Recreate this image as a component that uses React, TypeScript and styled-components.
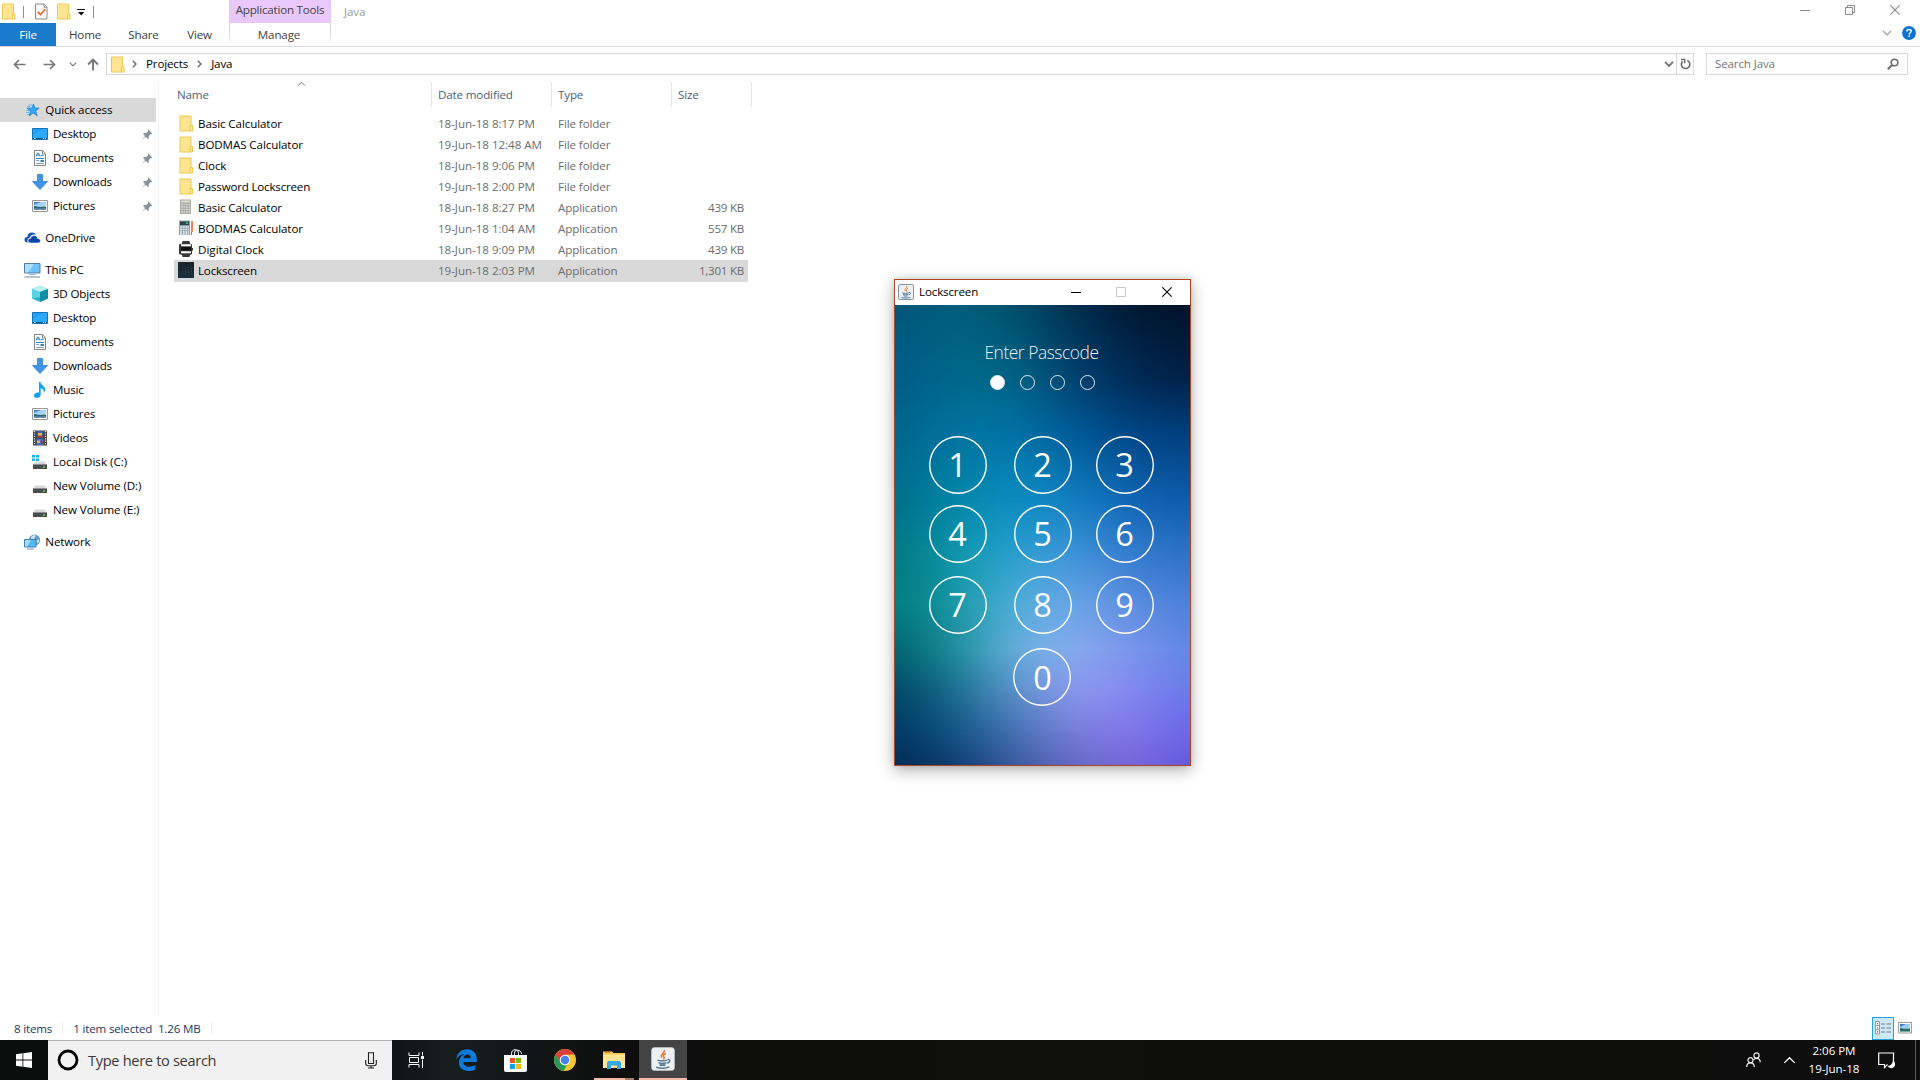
import React from 'react';
import styled, { createGlobalStyle, css } from 'styled-components';

const Global = createGlobalStyle`
  * { box-sizing: border-box; }
  body { margin: 0; background: #fff; overflow: hidden; }
  #root { height: 1080px; }
`;

const Desktop = styled.div`
  width: 1920px;
  height: 1080px;
  display: flex;
  flex-direction: column;
  background: #fff;
  color: #000;
  font: 11.6px/16px 'Open Sans', 'Noto Sans', sans-serif;
  letter-spacing: -0.15px;
  white-space: nowrap;
`;

const Label = styled.span<{ $ls?: number }>`
  ${p => p.$ls !== undefined && css`letter-spacing: ${p.$ls}px;`}
`;
const Gap = styled.i<{ $w: number }>`
  flex: none;
  width: ${p => p.$w}px;
`;

/* ---------- title bar and ribbon ---------- */

const Ribbon = styled.header`
  display: flex;
  height: 47px;
  border-bottom: 1px solid #dadbdc;
`;
const RibbonLeft = styled.div`
  width: 229px;
  display: flex;
  flex-direction: column;
`;
const QuickTools = styled.div`
  height: 23px;
  display: flex;
  align-items: center;
  padding-left: 2px;
`;
const ToolDivider = styled.i<{ $l: number; $r: number }>`
  width: 1px;
  height: 12px;
  background: #8f8f8f;
  margin: 0 ${p => p.$r}px 0 ${p => p.$l}px;
`;
const Tabs = styled.nav`
  display: flex;
  height: 23px;
  line-height: 24px;
  color: #3b3b3b;
`;
const FileTab = styled.div`
  width: 56px;
  background: #1979ca;
  color: #fff;
  text-align: center;
`;
const Tab = styled.div<{ $w: number }>`
  width: ${p => p.$w}px;
  text-align: center;
`;
const ContextTab = styled.div`
  width: 102px;
  text-align: center;
  color: #444;
`;
const ContextTitle = styled.div`
  height: 23px;
  line-height: 20px;
  letter-spacing: -0.22px;
  background: #e9c9fb;
`;
const ContextName = styled.div`
  height: 19px;
  line-height: 24px;
  padding-right: 2px;
  border: 1px solid;
  border-width: 0 1px;
  border-image: linear-gradient(#c9c9c9, #eee) 1;
`;
const WindowTitle = styled.div`
  flex: 1;
  padding: 4px 0 0 13px;
  color: #999;
`;
const WindowControls = styled.div`
  display: flex;
  flex-direction: column;
  align-items: flex-end;
`;
const ControlRow = styled.div<{ $gap: number; $pr: number; $h: number }>`
  display: flex;
  align-items: center;
  height: ${p => p.$h}px;
  gap: ${p => p.$gap}px;
  padding-right: ${p => p.$pr}px;
`;

/* ---------- address bar ---------- */

const AddressRow = styled.div`
  height: 35px;
  display: flex;
  align-items: flex-start;
  padding-top: 6px;
`;
const NavButtons = styled.div`
  width: 106px;
  height: 22px;
  display: flex;
  align-items: center;
  padding-left: 12.5px;
`;
const PathBox = styled.div`
  width: 1588px;
  height: 22px;
  border: 1px solid #d9d9d9;
  display: flex;
  align-items: center;
  padding-left: 4px;
`;
const Crumb = styled.span`
  margin: 0 9px 0 9px;
`;
const PathEnd = styled.div`
  margin-left: auto;
  display: flex;
  align-items: center;
  height: 100%;
`;
const Refresh = styled.div`
  width: 17px;
  height: 100%;
  margin-left: 2px;
  padding-left: 1px;
  border-left: 1px solid #d9d9d9;
  display: grid;
  place-items: center;
`;
const SearchBox = styled.div`
  width: 202px;
  height: 22px;
  margin-left: 12px;
  border: 1px solid #d9d9d9;
  display: flex;
  align-items: center;
  justify-content: space-between;
  padding: 0 8px;
  color: #767676;
`;

/* ---------- navigation pane ---------- */

const Body = styled.div`
  flex: 1;
  display: flex;
  min-height: 0;
`;
const Sidebar = styled.aside`
  width: 159px;
  border-right: 1px solid #f2f2f2;
  padding-top: 16px;
`;
const Group = styled.div`
  margin-bottom: 8px;
`;
const NavItem = styled.div<{ $top?: boolean; $selected?: boolean }>`
  height: 24px;
  width: 156px;
  display: flex;
  align-items: center;
  padding-left: ${p => (p.$top ? 24 : 32)}px;
  background: ${p => (p.$selected ? '#d9d9d9' : 'none')};
  & > svg:first-child {
    flex: none;
    width: ${p => (p.$top ? 17 : 16)}px;
    margin-right: ${p => (p.$top ? 4.3 : 4.9)}px;
  }
  & > svg + span + svg { margin-left: auto; margin-right: 3px; }
`;

/* ---------- file list ---------- */

const FileArea = styled.main`
  padding-left: 15px;
`;
const columns = css`
  display: grid;
  grid-template-columns: 258px 120px 120px 80px;
`;
const HeadRow = styled.div`
  ${columns}
  height: 25px;
  color: #4c607a;
`;
const HeadCell = styled.div<{ $first?: boolean }>`
  border-right: 1px solid #e5e5e5;
  padding: 5px 0 0 ${p => (p.$first ? 3 : 6)}px;
  display: flex;
`;
const SortMark = styled.span`
  margin: -6px 0 0 88px;
  line-height: 0;
`;
const FileRows = styled.div`
  padding-top: 6px;
`;
const FileRow = styled.div<{ $selected?: boolean }>`
  ${columns}
  grid-template-columns: 258px 120px 120px 76px;
  width: 574px;
  height: ${p => (p.$selected ? 22 : 21)}px;
  align-items: start;
  line-height: 21px;
  color: #6d6d6d;
  background: ${p => (p.$selected ? '#d9d9d9' : 'none')};
`;
const FileName = styled.div`
  display: flex;
  align-items: center;
  height: 21px;
  gap: 4px;
  padding-left: 4px;
  letter-spacing: -0.1px;
  color: #000;
  & > svg { margin-top: -1px; }
`;
const Cell = styled.div<{ $right?: boolean; $date?: boolean }>`
  padding: 0 4px 0 6px;
  text-align: ${p => (p.$right ? 'right' : 'left')};
  letter-spacing: ${p => (p.$right ? -0.25 : p.$date ? -0.04 : -0.1)}px;
`;

/* ---------- status bar ---------- */

const StatusBar = styled.footer`
  height: 24px;
  display: flex;
  align-items: center;
  padding-left: 14px;
  letter-spacing: -0.18px;
  color: #1e395b;
  & > span { margin-top: 1px; }
`;
const StatusDivider = styled.i<{ $l: number; $r: number }>`
  width: 1px;
  height: 12px;
  background: #ececec;
  margin: 0 ${p => p.$r}px 0 ${p => p.$l}px;
`;
const ViewToggle = styled.div`
  margin-left: auto;
  display: flex;
  align-items: center;
  padding-right: 8px;
  gap: 4px;
`;
const ViewSelected = styled.div`
  width: 22px;
  height: 23px;
  border: 1px solid #26a0da;
  background: #cbe8f6;
  display: grid;
  place-items: center;
`;

/* ---------- taskbar ---------- */

const Taskbar = styled.div`
  height: 40px;
  display: flex;
  background: linear-gradient(90deg, #0b0c0c 0, #101414 390px, #161e1e 450px, #0d0e0d 620px, #0f0f0d 1000px, #0d0e0d 100%);
  color: #fff;
`;
const StartButton = styled.div`
  width: 48px;
  display: grid;
  place-items: center;
`;
const TaskSearch = styled.div`
  width: 344px;
  background: #f1f1f1;
  border-top: 1px solid #b5b5b5;
  display: flex;
  align-items: center;
  padding: 0 15px 1px 9px;
  font-size: 14.6px;
  letter-spacing: -0.32px;
  color: #3a3a3a;
  & > span { margin: 0 auto 0 9px; }
`;
const TaskButton = styled.div<{ $active?: boolean; $open?: boolean; $first?: boolean }>`
  width: ${p => (p.$active ? 48 : 49)}px;
  margin-right: ${p => (p.$first ? 1.5 : 0)}px;
  padding-right: ${p => (p.$active ? 0 : 1)}px;
  display: grid;
  place-items: center;
  background: ${p => (p.$active ? '#434443' : 'none')};
  border-bottom: ${p => (p.$active ? '2px solid #f5bba7' : '0 solid')};
  ${p => p.$open && css`
    background: linear-gradient(90deg, transparent 4px, #f5bba7 4px, #f5bba7 35px, #a67e71 35px, #a67e71 44px, transparent 44px) bottom / 100% 2px no-repeat;
  `}
`;
const Tray = styled.div`
  margin-left: auto;
  display: flex;
  align-items: center;
`;
const Clock = styled.div`
  width: 56px;
  margin: 0 16px 1px 10px;
  text-align: center;
  line-height: 18px;
  letter-spacing: -0.05px;
`;
const ShowDesktop = styled.i`
  height: 40px;
  width: 5px;
  margin-left: 20px;
  border-left: 1px solid #5b5b5b;
`;

/* ---------- lockscreen window ---------- */

const LockWindow = styled.section`
  position: absolute;
  left: 894px;
  top: 279px;
  width: 297px;
  height: 487px;
  border: 1px solid #b3441c;
  box-shadow: 0 4px 15px rgba(0, 0, 0, 0.32), 0 0 5px rgba(0, 0, 0, 0.1);
  display: flex;
  flex-direction: column;
  background: #fff;
`;
const LockTitle = styled.div`
  height: 25px;
  display: flex;
  align-items: center;
  padding: 0 18px 1px 3px;
  & > span { margin: 0 auto 0 5px; }
`;
const LockBody = styled.div`
  flex: 1;
  position: relative;
  overflow: hidden;
  isolation: isolate;
  color: #fff;
`;
const Backdrop = styled.div`
  position: absolute;
  inset: 0;
  z-index: -1;
`;
const Band = styled.i<{ $from: number; $to: number; $colors: string }>`
  position: absolute;
  inset: 0;
  background: linear-gradient(90deg, ${p => p.$colors});
  mask-image: linear-gradient(transparent ${p => p.$from}px, #000 ${p => p.$to}px);
`;
const Prompt = styled.div`
  padding: 34px 2px 0 0;
  height: 70px;
  text-align: center;
  font: 300 17.4px/26px 'Open Sans', 'Noto Sans', sans-serif;
  letter-spacing: -0.45px;
  color: #e8eef0;
`;
const Dots = styled.div`
  display: flex;
  gap: 15px;
  padding-left: 95px;
  height: 61px;
`;
const Dot = styled.i<{ $on?: boolean }>`
  width: 15px;
  height: 15px;
  border-radius: 50%;
  border: 1px solid #dfe9ee;
  background: ${p => (p.$on ? '#fff' : 'none')};
`;
const Keypad = styled.div`
  display: grid;
  grid-template-columns: 85px 82px 58px;
  grid-template-rows: 69px 71px 72px 58px;
  padding-left: 34px;
`;
const Key = styled.div<{ $zero?: boolean }>`
  width: 58px;
  height: 58px;
  border-radius: 50%;
  box-shadow: inset 0 0 0 1.4px #fff;
  font: 32.5px/57px 'Open Sans', 'Noto Sans', sans-serif;
  text-align: center;
  letter-spacing: 0;
  padding-right: 1px;
  ${p => p.$zero && css`
    grid-column: 2;
    margin-left: -1px;
    padding: 1px 0 0 1px;
  `}
`;

const bands: [number, string[]][] = [
  [0, ['#00547a', '#00607c', '#00546f', '#002e50', '#001833', '#001126']],
  [75, ['#005a88', '#006b8c', '#006688', '#004474', '#002a56', '#002248']],
  [130, ['#00648c', '#0075a0', '#0076a8', '#005c9a', '#004686', '#003f7c']],
  [195, ['#006c88', '#0088a8', '#0c8fc0', '#1480c4', '#1064b2', '#0d5aaa']],
  [245, ['#00747e', '#0c98ac', '#27a0d0', '#4094d8', '#3079cc', '#2b70c4']],
  [300, ['#007a7c', '#1498a4', '#50b0dc', '#70a8e8', '#5c8ce0', '#4c80d8']],
  [345, ['#005f70', '#188e98', '#66b0de', '#8cacf0', '#7c94ec', '#5f86e4']],
  [385, ['#004464', '#14708c', '#5c94cc', '#8e9af0', '#8888f0', '#6478e8']],
  [425, ['#003860', '#0f5484', '#4474b4', '#7c80dc', '#8478ec', '#6866e6']],
  [460, ['#002c54', '#0c3c70', '#385c9e', '#686ac8', '#7a6adc', '#6058da']],
];

/* Spreads six colours over the width with eased steps, so no column edge shows. */
const smooth = (stops: string[]) => {
  const rgb = stops.map(c => [1, 3, 5].map(i => parseInt(c.slice(i, i + 2), 16)));
  const at = (i: number) => rgb[Math.max(0, Math.min(rgb.length - 1, i))];
  const out: string[] = [];
  for (let s = 0; s <= 30; s++) {
    const p = s / 6;
    const i = Math.min(4, Math.floor(p));
    const t = p - i;
    const mix = [0, 1, 2].map(k => {
      const [a, b, c, d] = [at(i - 1)[k], at(i)[k], at(i + 1)[k], at(i + 2)[k]];
      const v = ((1 - t) ** 3 * a + (3 * t ** 3 - 6 * t ** 2 + 4) * b + (-3 * t ** 3 + 3 * t ** 2 + 3 * t + 1) * c + t ** 3 * d) / 6;
      return Math.round(v);
    });
    out.push(`rgb(${mix.join(' ')})`);
  }
  return out.join(', ');
};

/* ---------- icons ---------- */

const Folder = () => (
  <svg width="14" height="17" viewBox="0 0 14 17">
    <path d="M.5 1h11v9.5h1.5v5.5H.5z" fill="#ffe591" stroke="#eac855" />
    <path d="M10.500 16v-5.300l1-.7" fill="none" stroke="#eac855" />
  </svg>
);
const Properties = () => (
  <svg width="13" height="17" viewBox="0 0 13 17">
    <path d="M.5 1h8.700L12 4v12H.5z" fill="#f8f8fa" stroke="#8c8c8c" />
    <path d="M9 1v3.200h3" fill="none" stroke="#8c8c8c" />
    <path d="M2.800 8.800l2.600 2.700 4.800-5.300" fill="none" stroke="#e8622a" strokeWidth="1.700" />
  </svg>
);
const Customize = () => (
  <svg width="8" height="8" viewBox="0 0 8 8"><path d="M0 1h8v1H0zM1 4h6.500L4.200 7.500z" fill="#111" /></svg>
);
const Minimize = ({ c = '#8a8a8a' }) => (
  <svg width="10" height="10" viewBox="0 0 10 10"><path d="M0 5.500h10" stroke={c} /></svg>
);
const Restore = () => (
  <svg width="10" height="10" viewBox="0 0 10 10" fill="none" stroke="#8a8a8a"><path d="M.5 2.500h7v7h-7zM2.500 2.500v-2h7v7h-2" /></svg>
);
const Maximize = () => (
  <svg width="10" height="10" viewBox="0 0 10 10"><path d="M.5.5h9v9h-9z" fill="none" stroke="#c9c9c9" /></svg>
);
const Close = ({ c = '#8a8a8a' }) => (
  <svg width="10" height="10" viewBox="0 0 10 10"><path d="M.3.3l9.400 9.400M9.700.3L.3 9.700" stroke={c} strokeWidth="1.100" /></svg>
);
const Chevron = ({ w = 9, c = '#777', s = 1.4, up = false }) => (
  <svg width={w} height={w * 0.62} viewBox="0 0 10 6">
    <path d={up ? 'M1 5.200l4-4 4 4' : 'M1 .8l4 4 4-4'} fill="none" stroke={c} strokeWidth={s} />
  </svg>
);
const CrumbArrow = () => (
  <svg width="5" height="8" viewBox="0 0 5 8"><path d="M.8.700L4 4 .8 7.300" fill="none" stroke="#6a6a6a" strokeWidth="1.400" /></svg>
);
const Help = () => (
  <svg width="14" height="14" viewBox="0 0 14 14">
    <circle cx="7" cy="7" r="6.900" fill="#0a74d0" />
    <path d="M4.900 5.400C4.900 2.700 9.200 2.900 9.200 5.200c0 1.500-2 1.600-2 3.300M7.200 9.500v1.600" fill="none" stroke="#fff" strokeWidth="1.500" />
  </svg>
);
const Arrow = ({ dir }: { dir: 'left' | 'right' }) => (
  <svg width="13" height="11" viewBox="0 0 13 11">
    <path d={dir === 'left' ? 'M12.500 5.500H1.500M6 1L1.500 5.500 6 10' : 'M.5 5.500h11M7 1l4.500 4.500L7 10'} fill="none" stroke="#777" strokeWidth="1.700" />
  </svg>
);
const UpArrow = () => (
  <svg width="12" height="13" viewBox="0 0 12 13"><path d="M6 12.500V1.500M1 6.500l5-5 5 5" fill="none" stroke="#777" strokeWidth="1.900" /></svg>
);
const RefreshIcon = () => (
  <svg width="11" height="12" viewBox="0 0 11 12">
    <path d="M7.300 2.500A4.200 4.200 0 1 1 2.600 3.400" fill="none" stroke="#6d6d6d" strokeWidth="1.600" />
    <path d="M1 1.500h3.700v3.700" fill="none" stroke="#6d6d6d" strokeWidth="1.500" />
  </svg>
);
const Magnifier = () => (
  <svg width="12" height="12" viewBox="0 0 12 12"><circle cx="7.500" cy="4.500" r="3.300" fill="none" stroke="#6d6d6d" strokeWidth="1.600" /><path d="M5.300 6.800L.8 11.300" stroke="#6d6d6d" strokeWidth="2" /></svg>
);
const Star = () => (
  <svg width="17" height="16" viewBox="-1 0 17 16">
    <path d="M8.500 2l1.300 4 4.400.1-3.500 2.800 1.500 4.800-4-2.800-3.900 3 1.200-4.800L2 6.200l4.800-.1z" fill="#35a5ee" stroke="#1d86d1" strokeWidth=".8" />
    <path d="M3.500 3H7M2.200 4.500h3M1 8.500h3M1 10.500h3.500M2 12.500h2" stroke="#5cbcf5" />
  </svg>
);
const DesktopIcon = () => (
  <svg width="16" height="16" viewBox="0 0 16 16">
    <path d="M.5 2.500h15v11H.5z" fill="#1f9df5" stroke="#1573b8" /><path d="M1 9L10 3h5v9H1z" fill="#34b0ff" opacity=".6" />
    <path d="M1 12.500h14" stroke="#0c4f84" /><path d="M2 12.500h1.500M11 12.500h1M13 12.500h1" stroke="#d9f0ff" />
  </svg>
);
const DocIcon = () => (
  <svg width="16" height="16" viewBox="0 0 16 16">
    <path d="M2.500.5h8L13.500 4v11.500h-11z" fill="#fff" stroke="#868686" /><path d="M10.500.5V4h3" fill="none" stroke="#868686" />
    <path d="M4 6.500l1.500-3.500h1L8 6.500M4.600 5h3M8.500 5.500h3M4 8.500h8M8.500 10.500H12M8.500 11.500H12" stroke="#3186c4" fill="none" />
    <path d="M4 10.500h3.500M4 13.500h8" stroke="#8aa0b2" />
  </svg>
);
const DownloadIcon = () => (
  <svg width="16" height="16" viewBox="0 0 16 16"><path d="M5.500.5h5v7h5L8 15.500.5 7.500h5z" fill="#3c97e8" stroke="#2f7fcb" strokeWidth=".8" /></svg>
);
const PictureIcon = () => (
  <svg width="16" height="16" viewBox="0 0 16 16">
    <path d="M.5 2.500h15v11H.5z" fill="#fff" stroke="#999" /><path d="M2 4h12v8H2z" fill="#a8d4f5" />
    <path d="M2 4h7l-7 3z" fill="#4a8ad0" /><path d="M2 8c3 0 3 1 6 1s4-.5 6 0v3H2z" fill="#2c6478" /><path d="M2 10.500h12V12H2z" fill="#6d98b2" />
  </svg>
);
const CloudIcon = () => (
  <svg width="16" height="16" viewBox="0 0 16 16">
    <path d="M3.500 12.500C1 12.500 0 11.500 0 9.800 0 8.200 1 7 2.800 7 3.300 4 5 2.600 7.500 2.600c2 0 3.200.8 4 2.200C8 4 6 5.500 5.600 7.600 3.500 8 2.500 10 3.500 12.500z" fill="#1455b8" />
    <path d="M6.500 13C4 13 3.500 11.800 3.500 10.800c0-1.600 1.100-2.500 2.700-2.500C6.600 6.500 8 5.500 9.700 5.500c1.900 0 3.100 1.100 3.500 3 1.800.1 2.800 1 2.800 2.300 0 1.300-.9 2.200-2.500 2.200z" fill="#0b47a8" stroke="#fff" strokeWidth=".6" />
  </svg>
);
const PcIcon = () => (
  <svg width="17" height="16" viewBox="0 0 17 16">
    <path d="M.5 1.500h15.500v9.500H.5z" fill="#6fc3fb" stroke="#4c7fa8" /><path d="M1 2h9L4 10.500H1z" fill="#a9defe" />
    <path d="M5 12.500h7" stroke="#b0bcc8" /><path d="M.5 15h15.500" stroke="#8899aa" strokeWidth="1.200" />
  </svg>
);
const CubeIcon = () => (
  <svg width="16" height="16" viewBox="0 0 16 16">
    <path d="M0 3l8-3 8 3v9.500L8 16l-8-3.500z" fill="#27b8cc" /><path d="M0 3l8-3 8 3-8 3z" fill="#b8f0f4" /><path d="M8 6l8-3v9.500L8 16z" fill="#0a8fa6" /><path d="M0 3l8 3v5L0 12.500z" fill="#7fe3ec" opacity=".6" />
  </svg>
);
const MusicIcon = () => (
  <svg width="16" height="16" viewBox="0 0 16 16"><path d="M7 0h1.500c0 3 4.700 4 4.700 7.500 0 1.500-.6 2.600-1.300 3.500.4-2.700-.7-4.300-3.200-4.800v6.300C8.700 14.600 7 16 5 16s-3-1-3-2.500C2 11.500 4.500 10 7 10.600z" fill="#14a0f4" /></svg>
);
const VideoIcon = () => (
  <svg width="16" height="16" viewBox="0 0 16 16">
    <path d="M1 .5h14v15H1z" fill="#3a3a3a" /><path d="M2.500 1v14M13.500 1v14" stroke="#eee" strokeWidth="1.400" strokeDasharray="1.200 1.200" />
    <path d="M4.500 1h7v6.500h-7z" fill="#3e5fa8" /><path d="M4.500 8.500h7V15h-7z" fill="#4a6cc0" />
    <path d="M6 3h4v2.500H6zM5 10.500h3V13H5z" fill="#f0b93a" /><path d="M5 6h6v1.500H5zM9 11h2v3H9z" fill="#a83c2e" />
  </svg>
);
const DriveIcon = ({ win = false }) => (
  <svg width="16" height="16" viewBox="0 0 16 16">
    <path d="M3.500 7.500h9l2.500 3H1z" fill="#d8d8d8" />
    <path d="M1 10.500h14v4.500H1z" fill="#4a4c4e" /><path d="M1 10.500h14" stroke="#8e8e8e" /><path d="M11 12.300h2v1.500h-2z" fill="#3bea4a" />
    {win && <path d="M0 1h3v2.500H0zM4 1h3v2.500H4zM0 4.500h3V7H0zM4 4.500h3V7H4z" fill="#14b2e8" />}
  </svg>
);
const NetworkIcon = () => (
  <svg width="17" height="16" viewBox="0 0 17 16">
    <circle cx="10.500" cy="6" r="5.600" fill="#5d9bc6" /><path d="M7 3c2-2 3-2 5-1.500L10 5 7 5zM12 7l3-2c.5 2 0 3-1.500 4.500z" fill="#c7e3f0" />
    <path d="M.5 5.500h11.500v7.500H.5z" fill="#55b9f5" stroke="#3b82b5" /><path d="M1 6h6L3 12.500H1z" fill="#a5dcfc" /><path d="M3 15h7" stroke="#98a6b4" strokeWidth="1.200" />
  </svg>
);
const Pin = () => (
  <svg width="11" height="11" viewBox="0 0 11 11"><path d="M6.200.5l4.300 4.300-1 .4-.8-.2-2 2 .2 2-1 1L3.600 7.700.5 10.600l-.3-.3L3.200 7 1 5l1-1 2.200.3 1.900-2-.3-.9z" fill="#87919a" /></svg>
);
const FileFolder = () => (
  <svg width="16" height="17" viewBox="-1.500 0 16 17">
    <path d="M.5 1h11v9.500h1.500v5.500H.5z" fill="#ffe591" stroke="#eac855" />
    <path d="M10.500 16v-5.300l1-.7" fill="none" stroke="#eac855" />
  </svg>
);
const CalcIcon = () => (
  <svg width="16" height="16" viewBox="0 0 16 16">
    <path d="M2 .5h11v14.500H2z" fill="#a9a9a6" /><path d="M3 1.500h9V3.500H3z" fill="#dce0c8" />
    <path d="M3 5.500h9.500M3 8h9.500M3 10.500h9.500M3 13h9.500" stroke="#d6d6d3" strokeWidth="1.500" strokeDasharray="1.700 .8" />
  </svg>
);
const CalcPenIcon = () => (
  <svg width="16" height="16" viewBox="0 0 16 16">
    <path d="M1 .5h11v14.500H1z" fill="#8fa0ab" /><path d="M2 1.500h9V5H2z" fill="#2c4450" /><path d="M8 2.500h2V4H8z" fill="#4cc490" />
    <path d="M2 7h9M2 9.500h9M2 12h9M2 14h9" stroke="#e8eef2" strokeWidth="1.400" strokeDasharray="2 .7" /><path d="M14 1v11" stroke="#f26a3a" strokeWidth="1.700" /><path d="M13.500 12v3" stroke="#888" />
  </svg>
);
const WatchIcon = () => (
  <svg width="16" height="16" viewBox="0 0 16 16"><path d="M4.500 0h7l.5 2.500 2 1V7h1v2.500h-1v3.500l-2 1-.5 2h-7L4 14l-3-1V3.500l3-1z" fill="#383838" /><path d="M3 4.200h10M3 11.200h10" stroke="#fff" strokeWidth="2" /><path d="M3 6h10v3.500H3z" fill="#111" /></svg>
);
const LockIcon = () => (
  <svg width="16" height="16" viewBox="0 0 16 16"><path d="M0 0h16v16H0z" fill="#182630" /><path d="M0 9h16v7H0z" fill="#1b2e38" /><path d="M7.500 6v7M10.500 5v7M13.500 6v7" stroke="#34495a" strokeDasharray="1 1.500" /></svg>
);
const JavaIcon = ({ size = 16 }) => (
  <svg width={size} height={size} viewBox="0 0 24 24">
    <rect x=".7" y=".7" width="22.600" height="22.600" rx="2.500" fill="#eef1f4" stroke={size > 20 ? '#d5dbe0' : '#7d90a4'} strokeWidth={size > 20 ? 0.8 : 1.5} />
    <path d="M13.200 3c1.500 3-4.500 4.400-2.500 7.500M15 6.500c-2.500 1-3.500 2.300-2 3.800.6.800 0 1.600-.8 2.200" fill="none" stroke="#e8792c" strokeWidth="1.500" />
    <path d="M6.500 13.200c2 1 7.500 1 9.500 0M7.500 15.600c2 .8 6 .8 8 0M8.500 17.800c1.800.6 4.200.6 6 0M5 20.200c4 1.200 10 1.200 13.500-.3M16.500 12.700c3.200-.6 3 2.600-.3 3.600" fill="none" stroke="#537896" strokeWidth="1.500" />
  </svg>
);
const DetailsView = () => (
  <svg width="16" height="14" viewBox="0 0 16 14">
    <path d="M.5.5h4v12.500h-4zM.5 4.500h4M.5 8.700h4" fill="#fff" stroke="#9a9a9a" /><path d="M6 3h4M11.500 3H16M6 7h4M11.500 7H16M6 11h4M11.500 11H16" stroke="#7d7d7d" />
    <path d="M2 2.200h1v1H2z" fill="#444" /><path d="M2 6.200h1.200v1.200H2z" fill="#3a7be0" /><path d="M2 10.300h1.200v1.200H2z" fill="#e03030" />
  </svg>
);
const LargeView = () => (
  <svg width="14" height="12" viewBox="0 0 14 12"><path d="M.5.500h13v10.500H.5z" fill="#fff" stroke="#9a9a9a" /><path d="M2 2h10v7.500H2z" fill="#9ccdf2" /><path d="M2 2h6L2 5z" fill="#3f7cc8" /><path d="M2 6c3 0 4 1.500 10 .5v3H2z" fill="#2b6c60" /></svg>
);
const WindowsLogo = () => (
  <svg width="16" height="16" viewBox="0 0 16 16"><path d="M0 2.200l6.500-.9v6.200H0zM7.300 1.200L16 0v7.500H7.300zM0 8.400h6.500v6.300L0 13.800zM7.300 8.400H16V16l-8.700-1.200z" fill="#fff" /></svg>
);
const CortanaRing = () => (
  <svg width="22" height="22" viewBox="0 0 22 22"><circle cx="11" cy="11" r="9" fill="none" stroke="#000" strokeWidth="2.800" /></svg>
);
const Mic = () => (
  <svg width="12" height="17" viewBox="0 0 12 17"><path d="M3.500.7h5v10.800h-5zM.7 8v3.500c0 1.500.7 2.200 2.300 2.200h6c1.600 0 2.300-.7 2.300-2.200V8M6 13.700V16M3 16h6" fill="none" stroke="#222" strokeWidth="1.100" /></svg>
);
const TaskView = () => (
  <svg width="17" height="16" viewBox="0 0 17 16">
    <path d="M1 .5v3h10v-3M1.500 5.500h9v5h-9zM1 15.500v-3h10v3" fill="none" stroke="#fff" />
    <path d="M14.500 0v3.500M14.500 7.500V16" stroke="#fff" /><path d="M13 4h3v3h-3z" fill="#fff" />
  </svg>
);
const Edge = () => (
  <svg width="21" height="22" viewBox="0 0 21 22"><path d="M.3 10.200C1 4 5.200.3 11 .3c6.200 0 9.800 4.400 9.800 9.700v2.900H7.300c.2 3.300 3 4.800 6 4.800 2.300 0 4.300-.6 6-1.700v4.400c-1.900 1-4.300 1.500-6.800 1.500C6.500 21.900 3 18.400 3 13.700c0-3.700 2.100-7 5.700-8.500C5 5.300 2 7 .3 10.200zM7.500 9.200h7.300c0-2.400-1.400-3.700-3.400-3.700s-3.500 1.400-3.900 3.700z" fill="#0c7bdc" /></svg>
);
const Store = () => (
  <svg width="23" height="23" viewBox="0 0 23 23">
    <path d="M7.500 7V4.500C7.500 2.200 9 .7 11 .7s3.500 1.500 3.500 3.800V7M10.500 7V4.500c0-2 1-3.300 3-3.300s4 1.300 4 3.800" fill="none" stroke="#fff" />
    <path d="M0 6h23v15c0 1.300-.7 2-2 2H2c-1.300 0-2-.7-2-2z" fill="#fff" />
    <path d="M6 9h5v5H6z" fill="#f25022" /><path d="M12 9h5v5h-5z" fill="#7fba00" /><path d="M6 15h5v5H6z" fill="#00a4ef" /><path d="M12 15h5v5h-5z" fill="#ffb900" />
  </svg>
);
const Chrome = () => (
  <svg width="22" height="22" viewBox="0 0 22 22">
    <circle cx="11" cy="11" r="11" fill="#fbc62d" />
    <path d="M1.500 5.500A11 11 0 0 1 20.500 5.500L11 5.700l-4.800 8z" fill="#d8403a" /><path d="M1.500 5.500l4.800 8.300 4.700 2.700 2-.5L9.500 21.900A11 11 0 0 1 1.500 5.500z" fill="#27985a" />
    <circle cx="11" cy="11" r="5.300" fill="#fff" /><circle cx="11" cy="11" r="4.300" fill="#4286f0" />
  </svg>
);
const Explorer = () => (
  <svg width="22" height="18" viewBox="0 0 22 18">
    <path d="M0 .5h9l1.500 1.500H22V17H0z" fill="#f2c64c" /><path d="M0 3.500h22V17H0z" fill="#ffe591" /><path d="M2 .8h5v1.200H2z" fill="#d88a20" />
    <path d="M4 18v-6.500L5.500 10h11l1.500 1.500V18h-4v-3.500H8V18z" fill="#38a7e4" />
  </svg>
);
const People = () => (
  <svg width="15" height="16" viewBox="0 0 15 16" fill="none" stroke="#eee" strokeWidth="1.200"><circle cx="10.500" cy="3.500" r="2.600" /><circle cx="4.500" cy="8.200" r="2.500" /><path d="M.7 15c0-2.600 1.500-4.200 3.800-4.200S8.300 12.400 8.300 15M7.500 8c.8-1.200 1.800-1.700 3-1.700 2.200 0 3.700 1.500 3.700 4" /></svg>
);
const ActionCenter = () => (
  <svg width="17" height="17" viewBox="0 0 17 17"><path d="M9.500 12.500L6.500 15.500V12.500H.7V1h14.800v8" fill="none" stroke="#fff" strokeWidth="1.200" /><path d="M14.800 8.500a4 4 0 1 1-5.300 5.300c3 .3 5.300-2.300 5.300-5.300z" fill="#fff" /></svg>
);

/* ---------- data ---------- */

type Nav = { icon: React.ReactNode; text: string; ls?: number; pin?: boolean };

const quick: Nav[] = [
  { icon: <DesktopIcon />, text: 'Desktop', ls: -0.2, pin: true },
  { icon: <DocIcon />, text: 'Documents', pin: true },
  { icon: <DownloadIcon />, text: 'Downloads', pin: true },
  { icon: <PictureIcon />, text: 'Pictures', pin: true },
];
const pc: Nav[] = [
  { icon: <CubeIcon />, text: '3D Objects' },
  { icon: <DesktopIcon />, text: 'Desktop', ls: -0.2 },
  { icon: <DocIcon />, text: 'Documents' },
  { icon: <DownloadIcon />, text: 'Downloads' },
  { icon: <MusicIcon />, text: 'Music' },
  { icon: <PictureIcon />, text: 'Pictures' },
  { icon: <VideoIcon />, text: 'Videos' },
  { icon: <DriveIcon win />, text: 'Local Disk (C:)', ls: 0.02 },
  { icon: <DriveIcon />, text: 'New Volume (D:)', ls: -0.08 },
  { icon: <DriveIcon />, text: 'New Volume (E:)', ls: -0.08 },
];
const files = [
  { icon: <FileFolder />, name: 'Basic Calculator', date: '18-Jun-18 8:17 PM', type: 'File folder', size: '' },
  { icon: <FileFolder />, name: 'BODMAS Calculator', date: '19-Jun-18 12:48 AM', type: 'File folder', size: '' },
  { icon: <FileFolder />, name: 'Clock', date: '18-Jun-18 9:06 PM', type: 'File folder', size: '' },
  { icon: <FileFolder />, name: 'Password Lockscreen', ls: -0.2, date: '19-Jun-18 2:00 PM', type: 'File folder', size: '' },
  { icon: <CalcIcon />, name: 'Basic Calculator', date: '18-Jun-18 8:27 PM', type: 'Application', size: '439 KB' },
  { icon: <CalcPenIcon />, name: 'BODMAS Calculator', date: '19-Jun-18 1:04 AM', type: 'Application', size: '557 KB' },
  { icon: <WatchIcon />, name: 'Digital Clock', ls: 0, date: '18-Jun-18 9:09 PM', type: 'Application', size: '439 KB' },
  { icon: <LockIcon />, name: 'Lockscreen', ls: -0.18, date: '19-Jun-18 2:03 PM', type: 'Application', size: '1,301 KB' },
];

const NavRow = ({ item }: { item: Nav }) => (
  <NavItem>{item.icon}<Label $ls={item.ls}>{item.text}</Label>{item.pin && <Pin />}</NavItem>
);

function LockscreenWindow() {
  return (
    <LockWindow>
      <LockTitle>
        <JavaIcon />
        <Label>Lockscreen</Label>
        <Minimize c="#000" /><Gap $w={35} /><Maximize /><Gap $w={36} /><Close c="#000" />
      </LockTitle>
      <LockBody>
        <Backdrop>
          {bands.map(([y, colors], i) => (
            <Band key={y} $from={i ? bands[i - 1][0] : -1} $to={y} $colors={smooth(colors)} />
          ))}
        </Backdrop>
        <Prompt>Enter Passcode</Prompt>
        <Dots><Dot $on /><Dot /><Dot /><Dot /></Dots>
        <Keypad>
          {['1', '2', '3', '4', '5', '6', '7', '8', '9', '0'].map(n => <Key key={n} $zero={n === '0'}>{n}</Key>)}
        </Keypad>
      </LockBody>
    </LockWindow>
  );
}

export default function App() {
  return (
    <Desktop>
      <Global />
      <Ribbon>
        <RibbonLeft>
          <QuickTools>
            <Folder /><ToolDivider $l={7} $r={11} /><Properties /><Gap $w={9} />
            <Folder /><Gap $w={6} /><Customize /><ToolDivider $l={8} $r={0} />
          </QuickTools>
          <Tabs>
            <FileTab>File</FileTab>
            <Tab $w={58}>Home</Tab>
            <Tab $w={59}>Share</Tab>
            <Tab $w={53}>View</Tab>
          </Tabs>
        </RibbonLeft>
        <ContextTab>
          <ContextTitle>Application Tools</ContextTitle>
          <ContextName>Manage</ContextName>
        </ContextTab>
        <WindowTitle>Java</WindowTitle>
        <WindowControls>
          <ControlRow $gap={35} $pr={20} $h={21}><Minimize /><Restore /><Close /></ControlRow>
          <ControlRow $gap={10} $pr={4} $h={27}><Chevron w={10} c="#999" s={1.2} /><Help /></ControlRow>
        </WindowControls>
      </Ribbon>
      <AddressRow>
        <NavButtons>
          <Arrow dir="left" /><Gap $w={17} /><Arrow dir="right" />
          <Gap $w={13} /><Chevron w={8} /><Gap $w={10} /><UpArrow />
        </NavButtons>
        <PathBox>
          <Folder /><Gap $w={7} /><CrumbArrow /><Crumb>Projects</Crumb><CrumbArrow /><Crumb>Java</Crumb>
          <PathEnd><Chevron w={10} s={2} /><Refresh><RefreshIcon /></Refresh></PathEnd>
        </PathBox>
        <SearchBox><Label>Search Java</Label><Magnifier /></SearchBox>
      </AddressRow>
      <Body>
        <Sidebar>
          <Group>
            <NavItem $top $selected><Star /><Label>Quick access</Label></NavItem>
            {quick.map(n => <NavRow key={n.text} item={n} />)}
          </Group>
          <Group><NavItem $top><CloudIcon /><Label>OneDrive</Label></NavItem></Group>
          <Group>
            <NavItem $top><PcIcon /><Label>This PC</Label></NavItem>
            {pc.map(n => <NavRow key={n.text} item={n} />)}
          </Group>
          <NavItem $top><NetworkIcon /><Label>Network</Label></NavItem>
        </Sidebar>
        <FileArea>
          <HeadRow>
            <HeadCell $first>Name<SortMark><Chevron w={9} s={1.1} up /></SortMark></HeadCell>
            <HeadCell>Date modified</HeadCell>
            <HeadCell>Type</HeadCell>
            <HeadCell>Size</HeadCell>
          </HeadRow>
          <FileRows>
            {files.map((f, i) => (
              <FileRow key={i} $selected={i === 7}>
                <FileName>{f.icon}<Label $ls={f.ls}>{f.name}</Label></FileName>
                <Cell $date>{f.date}</Cell>
                <Cell>{f.type}</Cell>
                <Cell $right>{f.size}</Cell>
              </FileRow>
            ))}
          </FileRows>
        </FileArea>
      </Body>
      <StatusBar>
        <Label>8 items</Label><StatusDivider $l={10} $r={10} />
        <Label>1 item selected&nbsp; 1.26 MB</Label><StatusDivider $l={10} $r={0} />
        <ViewToggle><ViewSelected><DetailsView /></ViewSelected><LargeView /></ViewToggle>
      </StatusBar>
      <Taskbar>
        <StartButton><WindowsLogo /></StartButton>
        <TaskSearch><CortanaRing /><span>Type here to search</span><Mic /></TaskSearch>
        <TaskButton $first><TaskView /></TaskButton>
        <TaskButton><Edge /></TaskButton>
        <TaskButton><Store /></TaskButton>
        <TaskButton><Chrome /></TaskButton>
        <TaskButton $open><Explorer /></TaskButton>
        <TaskButton $active><JavaIcon size={24} /></TaskButton>
        <Tray>
          <People />
          <Gap $w={22} />
          <Chevron w={13} c="#fff" s={1} up />
          <Clock>2:06 PM<br />19-Jun-18</Clock>
          <ActionCenter />
          <ShowDesktop />
        </Tray>
      </Taskbar>
      <LockscreenWindow />
    </Desktop>
  );
}
